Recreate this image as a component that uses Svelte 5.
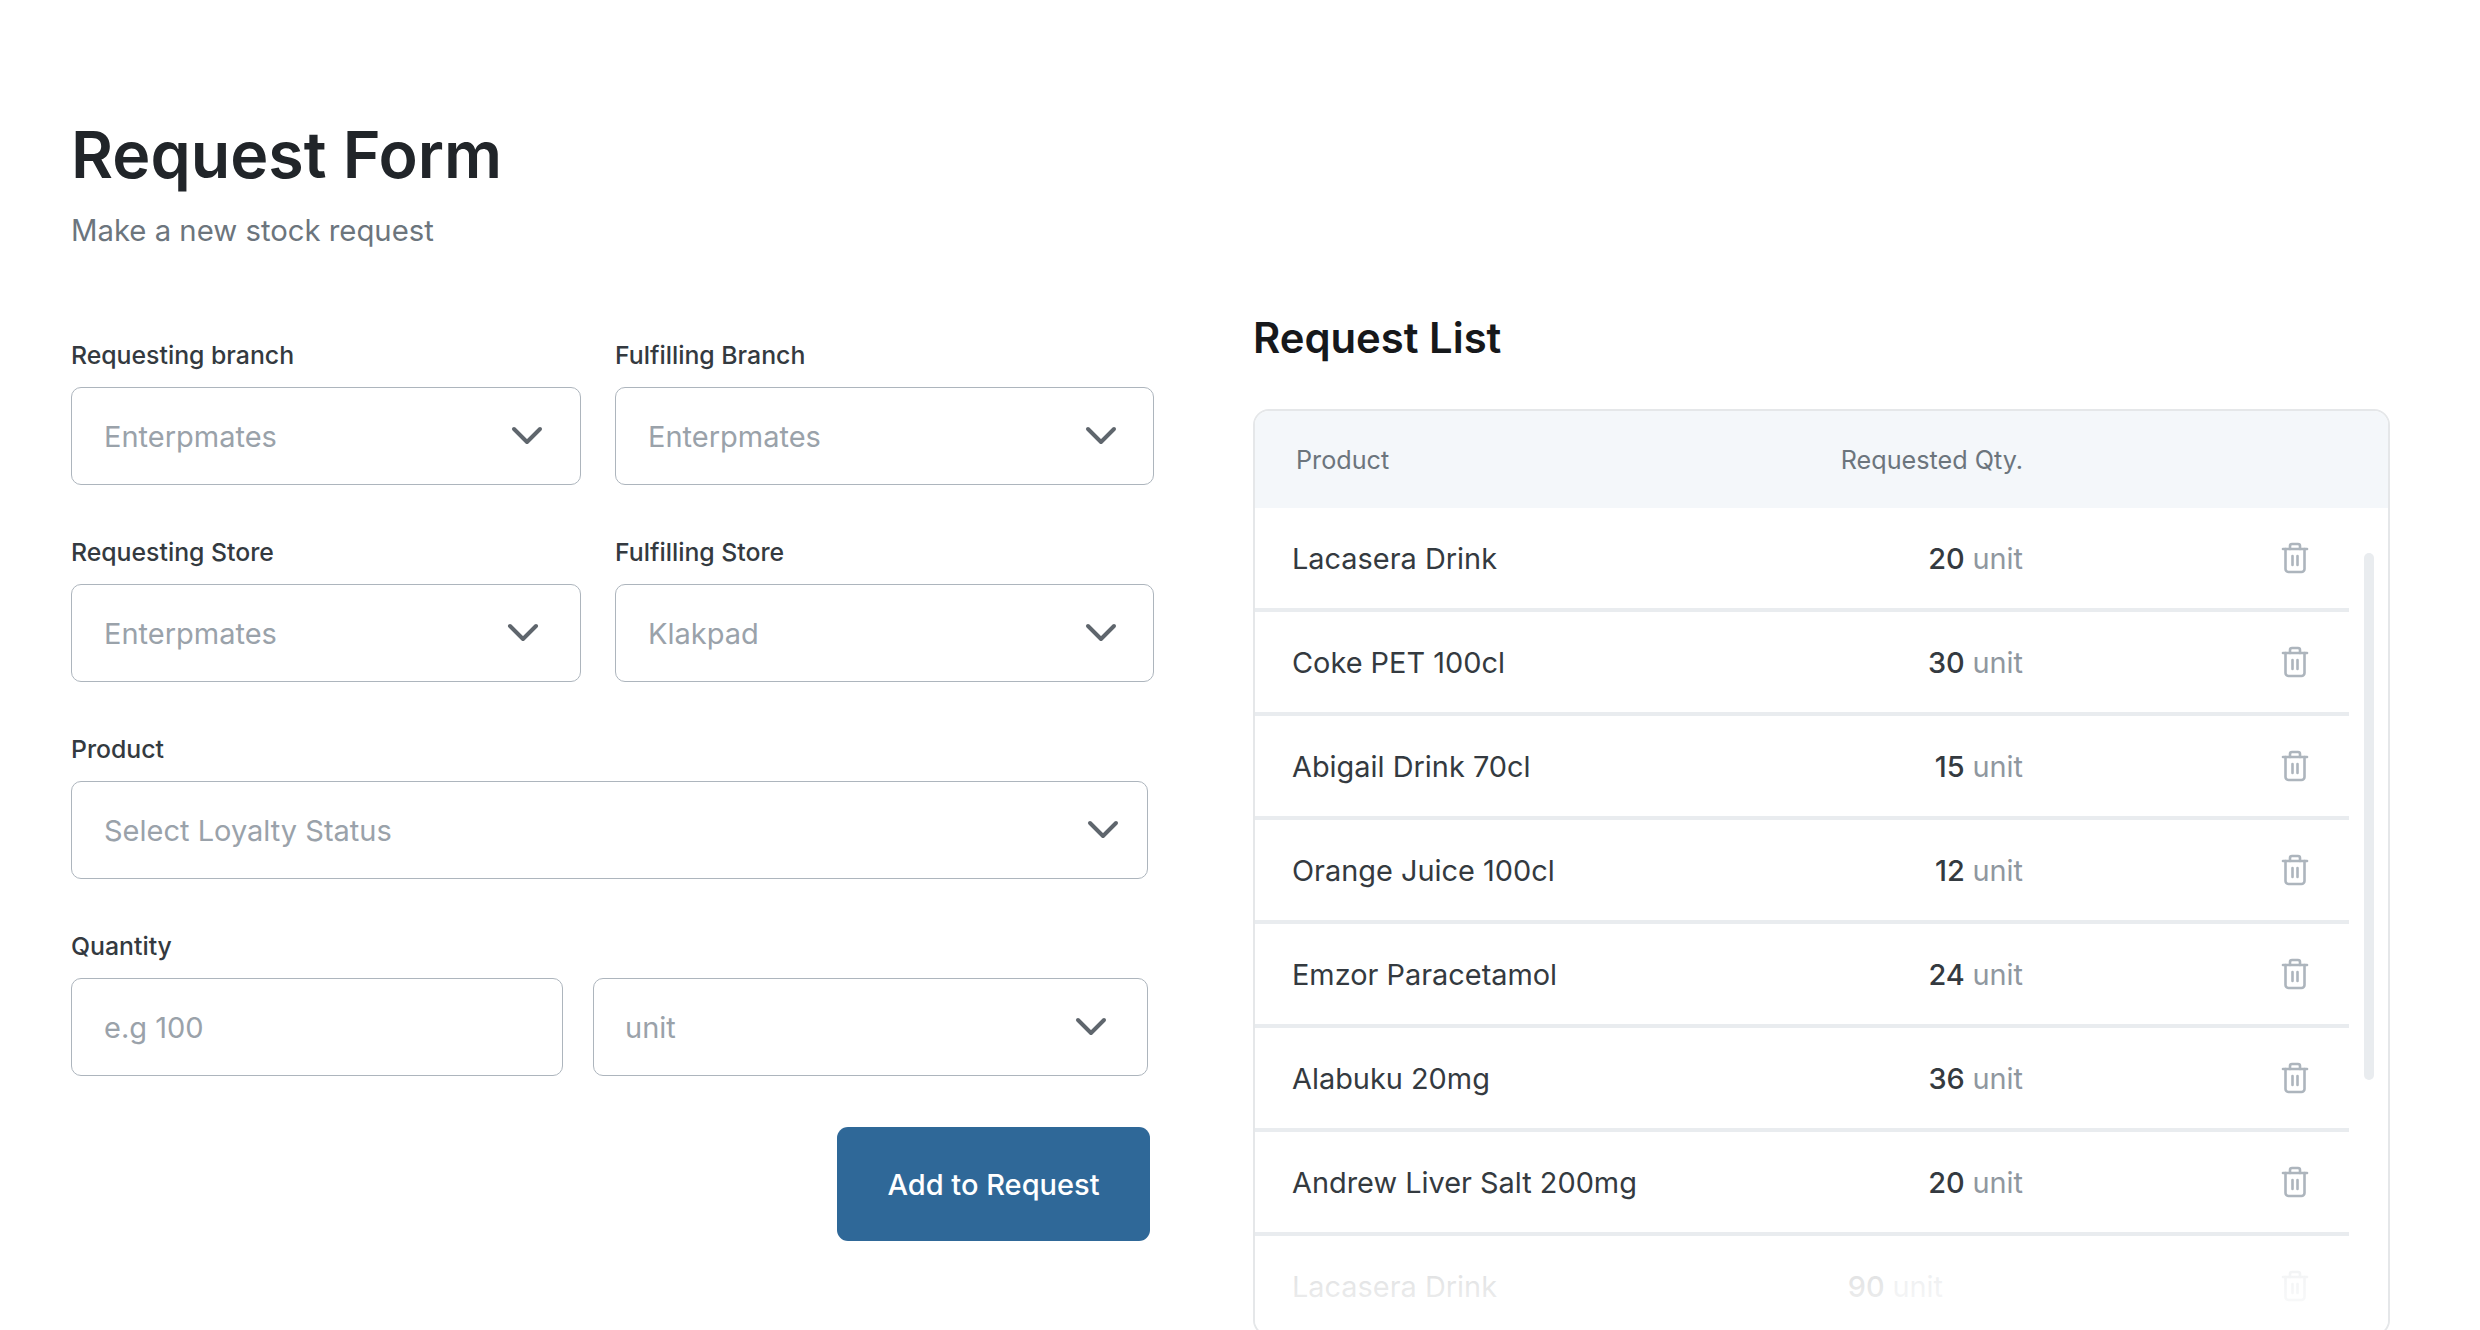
<script>
const items = [
  { name: 'Lacasera Drink', qty: 20 },
  { name: 'Coke PET 100cl', qty: 30 },
  { name: 'Abigail Drink 70cl', qty: 15 },
  { name: 'Orange Juice 100cl', qty: 12 },
  { name: 'Emzor Paracetamol', qty: 24 },
  { name: 'Alabuku 20mg', qty: 36 },
  { name: 'Andrew Liver Salt 200mg', qty: 20 },
  { name: 'Lacasera Drink', qty: 90, faded: true }
];
</script>

{#snippet chevron()}
  <svg class="chevron" viewBox="0 0 32 20" fill="none" stroke="#5f666d" stroke-width="4" stroke-linecap="round" stroke-linejoin="round">
    <path d="M3 3l13 13L29 3" />
  </svg>
{/snippet}

{#snippet trash()}
  <svg class="trash" viewBox="0 0 28 32" fill="none" stroke="#adb5bd" stroke-width="2.6" stroke-linecap="round" stroke-linejoin="round">
    <path d="M2 7h24" />
    <path d="M9 7V4a2 2 0 0 1 2-2h6a2 2 0 0 1 2 2v3" />
    <path d="M4.500 7v20a3 3 0 0 0 3 3h13a3 3 0 0 0 3-3V7" />
    <path d="M11.500 14v9M16.500 14v9" />
  </svg>
{/snippet}

<main class="page">
  <section class="form-side">
    <h1>Request Form</h1>
    <p class="sub">Make a new stock request</p>

    <div class="fields">
      <div class="row">
        <div class="field w510">
          <span class="label">Requesting branch</span>
          <div class="box pr-a"><span>Enterpmates</span>{@render chevron()}</div>
        </div>
        <div class="field w539">
          <span class="label">Fulfilling Branch</span>
          <div class="box pr-b"><span>Enterpmates</span>{@render chevron()}</div>
        </div>
      </div>
      <div class="row">
        <div class="field w510">
          <span class="label">Requesting Store</span>
          <div class="box pr-c"><span>Enterpmates</span>{@render chevron()}</div>
        </div>
        <div class="field w539">
          <span class="label">Fulfilling Store</span>
          <div class="box pr-b"><span>Klakpad</span>{@render chevron()}</div>
        </div>
      </div>
      <div class="row">
        <div class="field w1077">
          <span class="label">Product</span>
          <div class="box pr-d"><span>Select Loyalty Status</span>{@render chevron()}</div>
        </div>
      </div>
      <div class="row">
        <div class="field">
          <span class="label">Quantity</span>
          <div class="qty-row">
            <div class="box qty-input"><span>e.g 100</span></div>
            <div class="box unit"><span>unit</span>{@render chevron()}</div>
          </div>
        </div>
      </div>
    </div>

    <div class="actions">
      <button type="button">Add to Request</button>
    </div>
  </section>

  <section class="list-side">
    <h2>Request List</h2>
    <div class="panel">
      <div class="head">
        <span class="col-name">Product</span>
        <span class="col-qty">Requested Qty.</span>
      </div>
      <ul>
        {#each items as item}
          <li class:faded={item.faded}>
            <span class="name">{item.name}</span>
            <span class="qty">{item.qty} <em>unit</em></span>
            {@render trash()}
          </li>
        {/each}
      </ul>
      <div class="scrollbar"></div>
      <div class="fade"></div>
    </div>
  </section>
</main>

<style>
  :global(body) {
    margin: 0;
    background: #fff;
  }
  .page {
    display: flex;
    height: 1330px;
    overflow: hidden;
    padding-left: 71px;
    font-family: Inter, "Liberation Sans", sans-serif;
    color: #212529;
    box-sizing: border-box;
  }
  .form-side {
    width: 1182px;
    flex: none;
    padding-top: 114px;
    box-sizing: border-box;
  }
  h1 {
    margin: 0;
    font-size: 64.500px;
    line-height: 83px;
    font-weight: 600;
  }
  .sub {
    margin: 15px 0 0;
    font-size: 29.300px;
    line-height: 38px;
    color: #6c757d;
  }
  .fields {
    display: flex;
    flex-direction: column;
    gap: 51px;
    margin-top: 89px;
  }
  .row {
    display: flex;
    gap: 34px;
  }
  .field {
    display: flex;
    flex-direction: column;
    gap: 16px;
  }
  .w510 { width: 510px; }
  .w539 { width: 539px; }
  .w1077 { width: 1077px; }
  .label {
    font-size: 24.800px;
    line-height: 32px;
    font-weight: 500;
    color: #343a40;
  }
  .box {
    display: flex;
    align-items: center;
    justify-content: space-between;
    height: 98px;
    box-sizing: border-box;
    padding-left: 32px;
    border: 1.5px solid #adb5bd;
    border-radius: 10px;
    font-size: 29px;
    color: #9aa2aa;
  }
  .pr-a { padding-right: 37px; }
  .pr-b { padding-right: 36px; }
  .pr-c { padding-right: 41px; }
  .pr-d { padding-right: 28px; }
  .chevron {
    width: 32px;
    height: 20px;
    flex: none;
  }
  .qty-row {
    display: flex;
    gap: 30px;
  }
  .qty-input {
    width: 492px;
  }
  .unit {
    width: 555px;
    padding-left: 31px;
    padding-right: 40px;
  }
  .actions {
    display: flex;
    justify-content: flex-end;
    width: 1079px;
    margin-top: 51px;
  }
  button {
    width: 313px;
    height: 114px;
    border: 0;
    border-radius: 11px;
    background: #2f6898;
    color: #fff;
    font: 500 29px Inter, "Liberation Sans", sans-serif;
  }
  .list-side {
    width: 1137px;
    flex: none;
    padding-top: 313px;
    box-sizing: border-box;
    display: flex;
    flex-direction: column;
  }
  h2 {
    margin: 0;
    font-size: 41.800px;
    line-height: 50px;
    font-weight: 600;
    color: #16181b;
  }
  .panel {
    position: relative;
    margin-top: 46px;
    margin-bottom: -6px;
    flex: 1;
    border: 2px solid #e5e7e9;
    border-radius: 16px;
    overflow: hidden;
    box-sizing: border-box;
  }
  .head {
    display: flex;
    align-items: center;
    justify-content: space-between;
    height: 97px;
    background: #f4f7fa;
    font-size: 25.200px;
    color: #6c757d;
  }
  .col-name { margin-left: 41px; }
  .col-qty { margin-right: 365px; }
  ul {
    list-style: none;
    margin: 0;
    padding: 0 39px 0 0;
  }
  li {
    display: flex;
    align-items: center;
    height: 104px;
    box-sizing: border-box;
    padding: 0 40px 0 37px;
    border-bottom: 4px solid #e9ecef;
    font-size: 28.900px;
    color: #343a40;
  }
  .name {
    flex: 1;
  }
  .qty {
    margin-right: 258px;
    font-weight: 450;
  }
  .qty em {
    font-style: normal;
    font-weight: 400;
    color: #8f979f;
  }
  .faded .qty {
    margin-right: 338px;
  }
  .trash {
    width: 28px;
    height: 32px;
    flex: none;
  }
  .scrollbar {
    position: absolute;
    top: 142px;
    right: 14px;
    width: 10px;
    height: 527px;
    border-radius: 5px;
    background: #e9ecef;
  }
  .fade {
    position: absolute;
    left: 0;
    right: 0;
    bottom: 0;
    height: 90px;
    background: linear-gradient(rgba(255, 255, 255, 0.8), rgba(255, 255, 255, 0.97));
  }
</style>
